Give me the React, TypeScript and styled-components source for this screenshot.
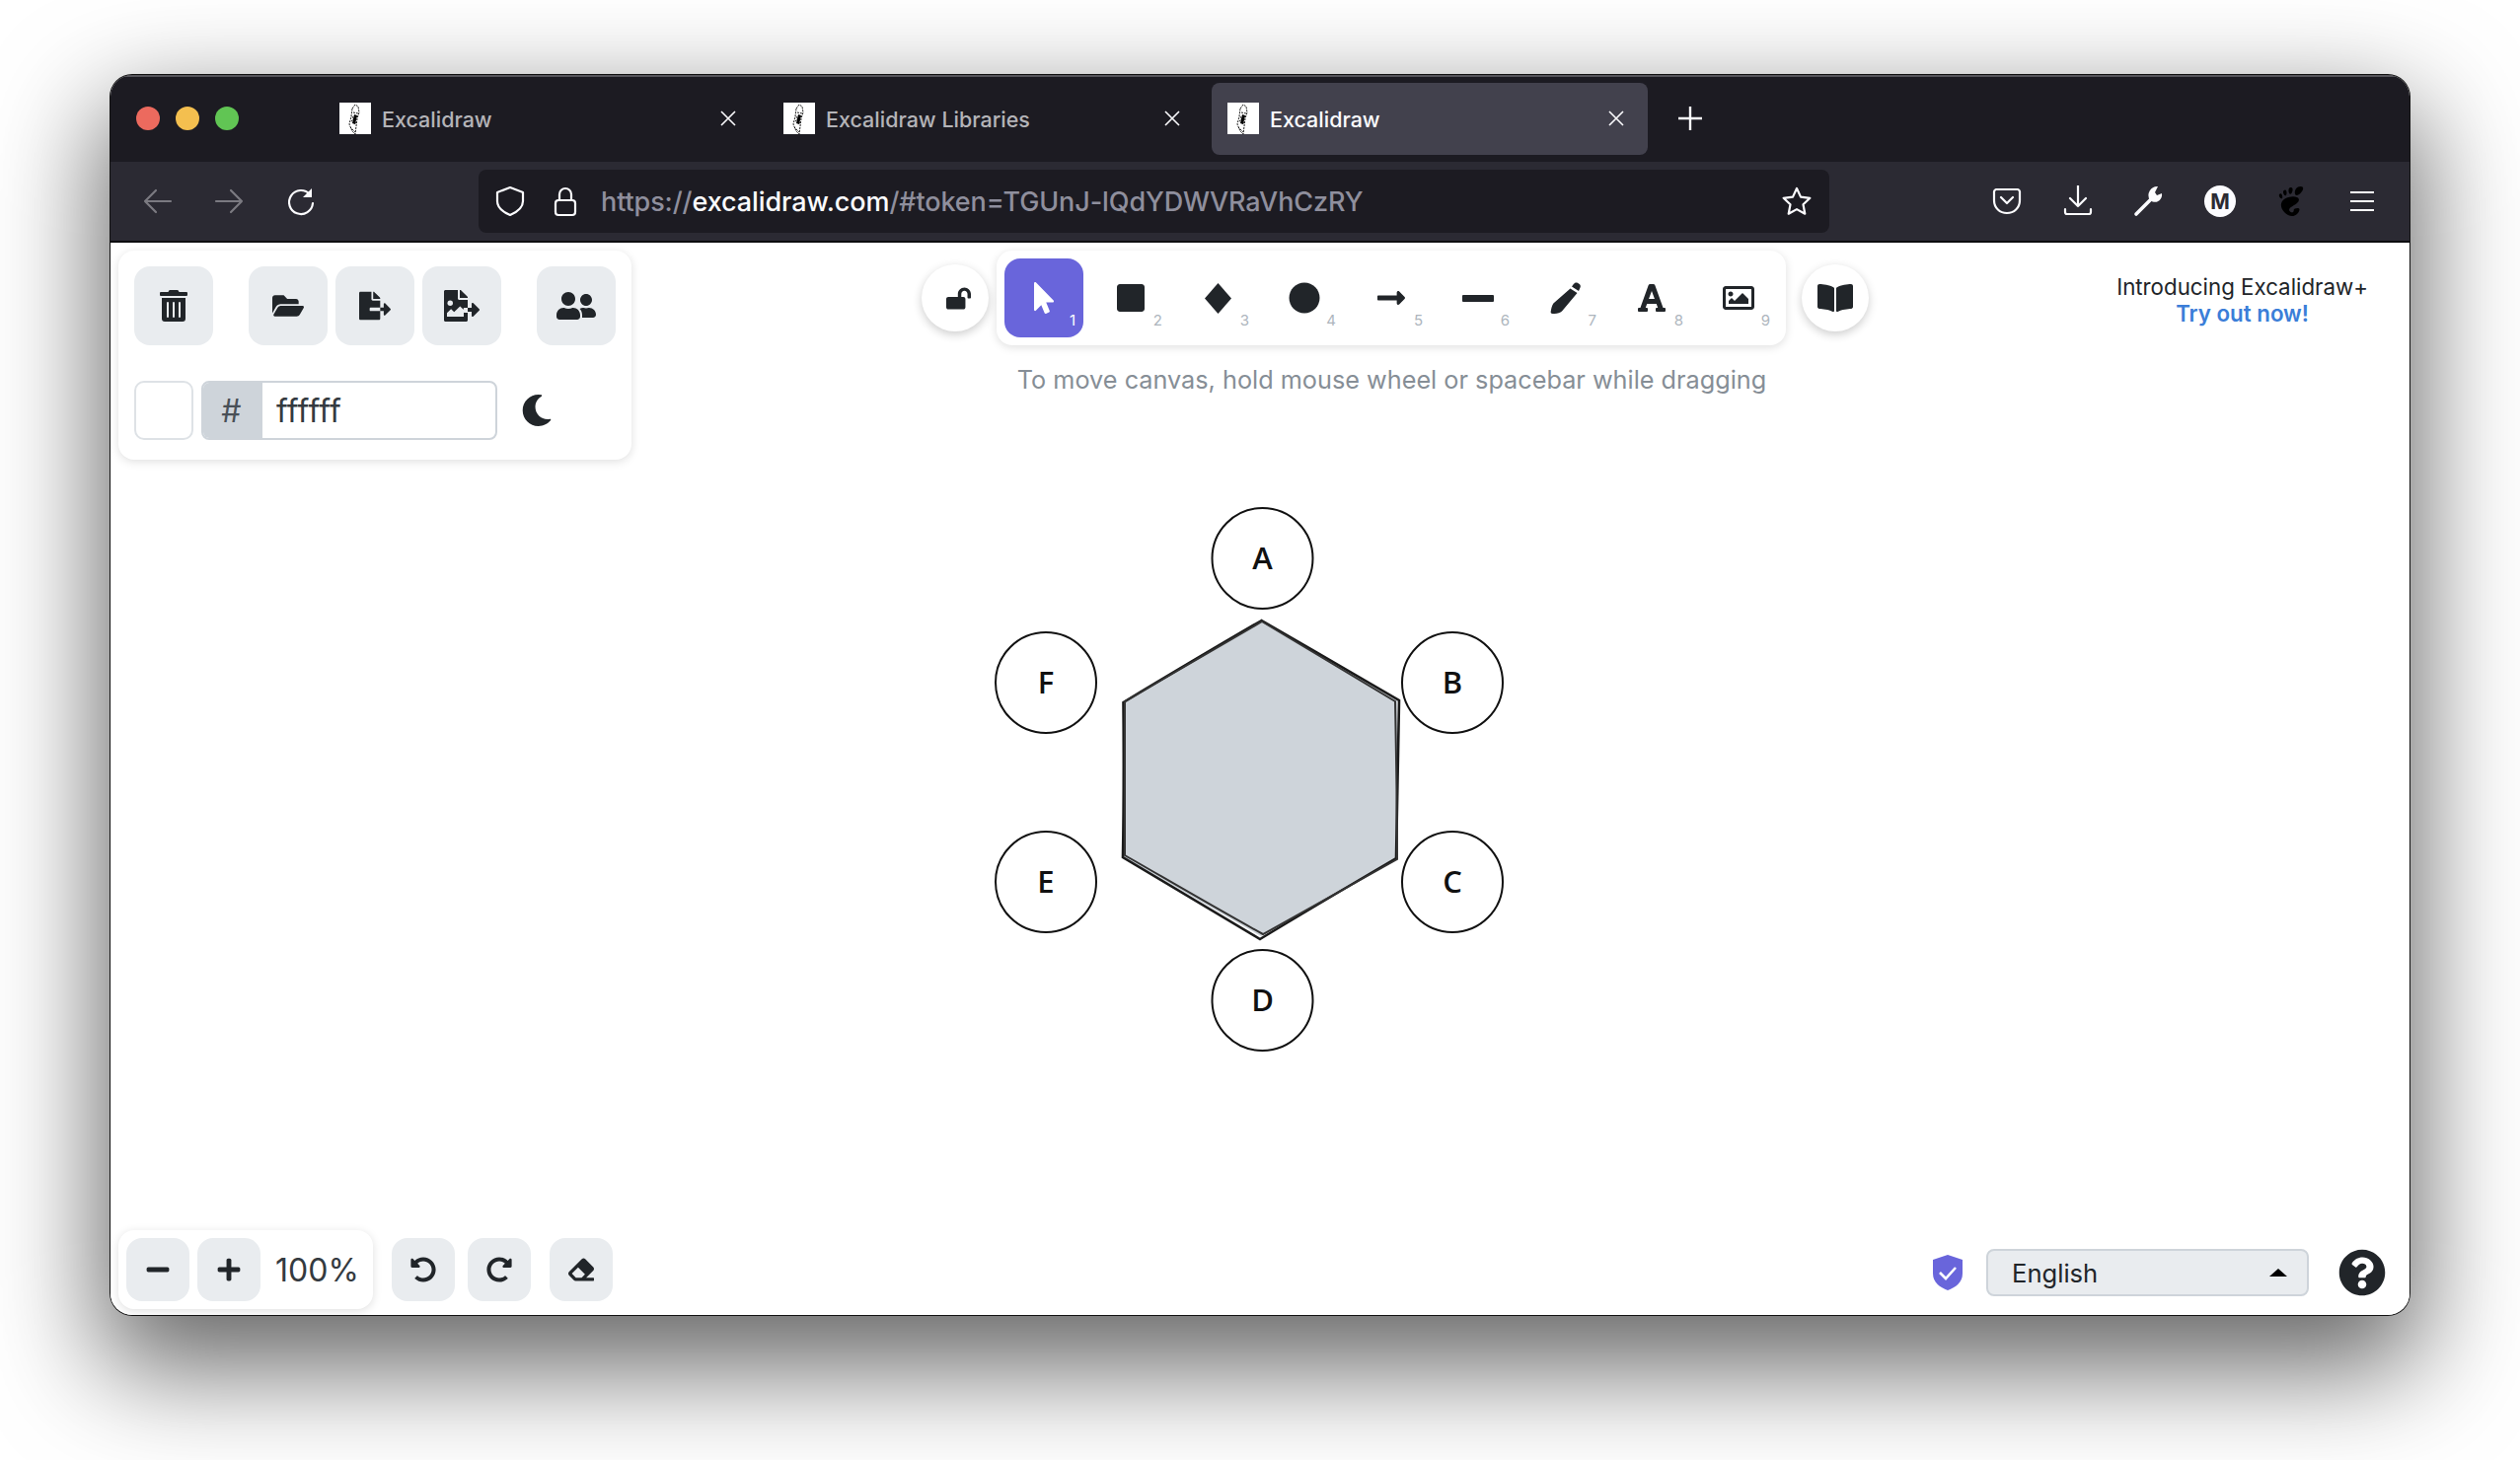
import * as React from 'react';
import styled, { createGlobalStyle } from 'styled-components';
import {
    FaBookOpen, FaCircle, FaEraser, FaFileExport, FaFolderOpen, FaFont, FaLockOpen, FaLongArrowAltRight,
    FaMinus, FaMoon, FaMousePointer, FaPlus, FaQuestionCircle, FaRedoAlt, FaRegImage,
    FaSquare, FaTrashAlt, FaUndoAlt, FaUserFriends,
} from 'react-icons/fa';
import { SiGnome } from 'react-icons/si';

const GlobalStyle = createGlobalStyle`
  html, body {
    margin: 0;
    padding: 0;
    background: #ffffff;
  }
  * {
    box-sizing: border-box;
  }
`;

const uiFont = `Inter, 'Liberation Sans', sans-serif`;

const Page = styled.div`
  width: 2554px;
  height: 1480px;
  padding: 76px 112px 147px 112px;
  font-family: ${uiFont};
  overflow: hidden;
`;

const BrowserWindow = styled.div`
  height: 100%;
  display: flex;
  flex-direction: column;
  border-radius: 22px;
  overflow: hidden;
  background: #ffffff;
  box-shadow: 0 0 0 1px #111, 0 44px 110px 10px rgba(0, 0, 0, 0.6);
`;

const TitleBar = styled.div`
  height: 88px;
  flex: none;
  display: flex;
  align-items: center;
  background: #1c1b22;
  box-shadow: inset 0 2px 0 #55545a;
  padding-left: 26px;
`;

const TrafficLights = styled.div`
  display: flex;
  gap: 16px;
  width: 190px;
`;

const TrafficLight = styled.span<{ $color: string }>`
  width: 24px;
  height: 24px;
  border-radius: 50%;
  background: ${p => p.$color};
`;

const Tab = styled.div<{ $active?: boolean }>`
  width: 442px;
  height: 73px;
  margin-right: 8px;
  padding: 0 16px;
  display: flex;
  align-items: center;
  border-radius: 8px;
  color: ${p => (p.$active ? '#fbfbfe' : '#b4b4b8')};
  background: ${p => (p.$active ? '#42414d' : 'transparent')};
  font-size: 21.5px;
  font-weight: 500;
`;

const TabTitle = styled.span`
  margin-left: 11px;
  padding-top: 2px;
  flex: 1;
`;

const Favicon = styled.svg`
  width: 32px;
  height: 32px;
  flex: none;
  background: #ffffff;
`;

const TabClose = styled.svg`
  width: 16px;
  height: 16px;
  margin-right: 8px;
  stroke: #fbfbfe;
  stroke-width: 1.6;
  fill: none;
`;

const NewTab = styled.svg`
  width: 24px;
  height: 24px;
  margin-left: 23px;
  stroke: #fbfbfe;
  stroke-width: 2.4;
  fill: none;
`;

const NavBar = styled.div`
  height: 82px;
  flex: none;
  display: flex;
  align-items: center;
  background: #2b2a33;
  border-bottom: 2px solid #0c0c0f;
`;

const NavSlot = styled.div<{ $width: number; $dim?: boolean }>`
  width: ${p => p.$width}px;
  display: flex;
  justify-content: center;
  align-items: center;
  color: ${p => (p.$dim ? '#7b7a81' : '#fbfbfe')};
`;

const NavIcon = styled.svg`
  width: 32px;
  height: 32px;
  stroke: currentColor;
  stroke-width: 2.2;
  fill: none;
  stroke-linecap: round;
  stroke-linejoin: round;
`;

const UrlBar = styled.div`
  width: 1369px;
  height: 64px;
  margin-left: 7px;
  border-radius: 8px;
  display: flex;
  align-items: center;
  background: #1c1b22;
  color: #fbfbfe;
`;

const UrlText = styled.div`
  margin-left: 12px;
  padding-top: 1px;
  flex: 1;
  white-space: nowrap;
  color: #8f8f9d;
  font-size: 27px;
  letter-spacing: -0.1px;
  font-weight: 500;
`;

const UrlHost = styled.span`
  color: #fbfbfe;
`;

const NavActions = styled.div`
  display: flex;
  margin-left: 144px;
`;

const Avatar = styled.span`
  width: 32px;
  height: 32px;
  border-radius: 50%;
  background: #fbfbfe;
  color: #2b2a33;
  display: flex;
  align-items: center;
  justify-content: center;
  font-size: 21px;
  font-weight: 700;
`;

const Canvas = styled.div`
  flex: 1;
  min-height: 0;
  display: grid;
  grid-template-rows: auto 1fr auto;
  background: #ffffff;
  color: #212529;
`;

const TopRow = styled.div`
  display: flex;
  align-items: flex-start;
  padding: 8px 42px 0 8px;
`;

const Island = styled.div`
  background: #ffffff;
  border-radius: 16px;
  box-shadow: 0 2px 10px rgba(0, 0, 0, 0.13);
`;

const ActionsPanel = styled(Island)`
  width: 520px;
  height: 212px;
  padding: 16px;
`;

const ButtonRow = styled.div`
  display: flex;
  gap: 8px;
`;

const IconGlyph = styled.span<{ $size: number; $color?: string; $shift?: number }>`
  display: flex;
  align-items: center;
  justify-content: center;
  margin-left: ${p => p.$shift || 0}px;
  color: ${p => p.$color || '#212529'};
  svg {
    display: block;
    height: ${p => p.$size}px;
    width: auto;
  }
`;

const ActionButton = styled.div<{ $gapBefore?: boolean; $small?: boolean }>`
  width: ${p => (p.$small ? 64 : 80)}px;
  height: ${p => (p.$small ? 64 : 80)}px;
  margin-left: ${p => (p.$gapBefore ? 28 : 0)}px;
  border-radius: 16px;
  display: flex;
  align-items: center;
  justify-content: center;
  background: #e9ecef;
`;

const BackgroundRow = styled.div`
  display: flex;
  align-items: center;
  margin-top: 36px;
  height: 60px;
`;

const Swatch = styled.div`
  width: 60px;
  height: 60px;
  border-radius: 10px;
  background: #ffffff;
  border: 2px solid #dee2e6;
`;

const HexField = styled.div`
  width: 300px;
  height: 60px;
  margin-left: 8px;
  display: flex;
  border: 2px solid #ced4da;
  border-radius: 8px;
  overflow: hidden;
  font-size: 32px;
  color: #343a40;
`;

const HexPrefix = styled.div`
  width: 60px;
  display: flex;
  align-items: center;
  justify-content: center;
  padding-right: 3px;
  background: #ced4da;
  color: #495057;
`;

const HexValue = styled.div`
  padding-left: 14px;
  display: flex;
  align-items: center;
  letter-spacing: 0.2px;
`;

const MoonSlot = styled.div`
  margin-left: 24px;
`;

const CenterColumn = styled.div`
  width: 960px;
  margin-left: 294px;
`;

const ToolRow = styled.div`
  display: flex;
  align-items: center;
`;

const RoundButton = styled.div`
  width: 68px;
  height: 68px;
  border-radius: 50%;
  display: flex;
  align-items: center;
  justify-content: center;
  background: #ffffff;
  box-shadow: 0 3px 10px rgba(0, 0, 0, 0.2);
`;

const ToolPanel = styled(Island)`
  width: 800px;
  height: 96px;
  padding: 8px;
  margin: 0 16px 0 8px;
  display: flex;
  gap: 8px;
`;

const ToolButton = styled.div<{ $active?: boolean }>`
  width: 80px;
  height: 80px;
  position: relative;
  border-radius: 16px;
  display: flex;
  align-items: center;
  justify-content: center;
  background: ${p => (p.$active ? '#6965db' : 'transparent')};
`;

const ToolKey = styled.span<{ $active?: boolean }>`
  position: absolute;
  right: 8px;
  bottom: 8px;
  font-size: 15px;
  line-height: 18px;
  color: ${p => (p.$active ? '#ffffff' : '#adb5bd')};
`;

const Hint = styled.div`
  margin-top: 18px;
  padding-right: 7px;
  line-height: 34px;
  text-align: center;
  font-size: 25.25px;
  color: #868e96;
`;

const Promo = styled.div`
  margin: 23px 0 0 auto;
  text-align: center;
  font-size: 22.3px;
  line-height: 27px;
  color: #212529;
`;

const PromoLink = styled.div`
  color: #3b7ed8;
  font-weight: 600;
`;

const Diagram = styled.svg`
  display: block;
  width: 530px;
  height: 565px;
  margin: 40px 0 0 888px;
`;

const NodeLabel = styled.text`
  font-family: 'Open Sans', sans-serif;
  font-size: 31px;
  font-weight: 600;
  text-anchor: middle;
  fill: #111111;
`;

const BottomRow = styled.div`
  display: flex;
  align-items: center;
  padding: 0 24px 6px 8px;
`;

const ZoomPanel = styled(Island)`
  width: 258px;
  height: 80px;
  padding: 8px;
  display: flex;
  align-items: center;
  gap: 8px;
`;

const ZoomValue = styled.div`
  margin-left: 7px;
  font-size: 32px;
  color: #343a40;
`;

const HistoryGroup = styled.div`
  display: flex;
  gap: 13px;
  margin-left: 19px;
`;

const EraseGroup = styled.div`
  margin-left: 19px;
`;

const FooterRight = styled.div`
  margin: 6px 0 0 auto;
  display: flex;
  align-items: center;
`;

const ShieldIcon = styled.svg`
  width: 30px;
  height: 36px;
`;

const LanguageSelect = styled.div`
  width: 327px;
  height: 48px;
  margin-left: 24px;
  padding: 0 20px 0 24px;
  display: flex;
  align-items: center;
  justify-content: space-between;
  border: 2px solid #ced4da;
  border-radius: 8px;
  background: #e9ecef;
  font-size: 25.6px;
  color: #212529;
`;

const SelectCaret = styled.span`
  width: 0;
  height: 0;
  border-left: 9px solid transparent;
  border-right: 9px solid transparent;
  border-bottom: 8px solid #000000;
`;

const HelpSlot = styled.div`
  margin-left: 30px;
`;

const tabTitles = ['Excalidraw', 'Excalidraw Libraries', 'Excalidraw'];

const FaviconMark = () => (
    <Favicon viewBox="0 0 32 32">
        <path d="M13 6l3-4 3 2 1 6-2 6-1 8-1 8-3-3-3-7 2-8zM14 10l5 1M12 19l7-6M13 14l4 8M11 25l5 5" fill="none" stroke="#000" strokeWidth="0.9" strokeDasharray="2 1" />
        <path d="M15 12l3 1-2 9-3-1z" fill="#000" />
    </Favicon>
);

const ImageExportIcon = () => (
    <svg viewBox="0 0 576 512">
        <path fill="currentColor" d="M384 121.9c0-6.3-2.5-12.4-7-16.9L279.1 7c-4.5-4.5-10.6-7-17-7H256v128h128zM571 308l-95.7-96.4c-10.1-10.1-27.4-3-27.4 11.3V288h-64v64h64v65.2c0 14.3 17.3 21.4 27.4 11.3L571 332c6.6-6.6 6.6-17.4 0-24zM316 336v-32c0-8.8 7.2-16 16-16h52V160H248c-13.2 0-24-10.8-24-24V0H24C10.7 0 0 10.7 0 24v464c0 13.3 10.7 24 24 24h336c13.3 0 24-10.7 24-24V368h-52c-8.8 0-16-7.2-16-16z" />
        <circle cx="100" cy="210" r="44" fill="#e9ecef" />
        <path d="M48 430v-60l66-62 50 48 96-92 60 56v110z" fill="#e9ecef" />
    </svg>
);

const PencilIcon = () => (
    <svg viewBox="0 0 32 32">
        <path fill="currentColor" d="M21.5 6.5l7 4.5L13 29.5c-2 1.7-5.5 2.7-9.5 2.5-1.5-.2-2-1-1.8-2.2.5-3.2 1.2-6 2.7-8.3zM23 4.6l1.8-2.6c1-1.4 2.5-2 4-1.2l1.6 1c1.4.9 1.8 2.5 1 4L30 8.9z" />
    </svg>
);

const tools = [
    { icon: <FaMousePointer />, size: 32, color: '#ffffff' },
    { icon: <FaSquare />, size: 32 },
    { icon: <svg viewBox="0 0 27 31"><path fill="currentColor" d="M13.5 0L27 15.5 13.5 31 0 15.5z" /></svg>, size: 31 },
    { icon: <FaCircle />, size: 32 },
    { icon: <FaLongArrowAltRight />, size: 32 },
    { icon: <svg viewBox="0 0 32 7"><rect fill="currentColor" width="32" height="7" rx="1" /></svg>, size: 7 },
    { icon: <PencilIcon />, size: 32 },
    { icon: <FaFont />, size: 32 },
    { icon: <FaRegImage />, size: 32 },
];

const nodes = [
    { label: 'A', x: 1279.5, y: 565 },
    { label: 'B', x: 1472, y: 691 },
    { label: 'C', x: 1472, y: 893 },
    { label: 'D', x: 1279.5, y: 1013 },
    { label: 'E', x: 1060, y: 893 },
    { label: 'F', x: 1060, y: 691 },
];

const App: React.FC = () => {
    function buildTabs() {
        return tabTitles.map((title, i) => (
            <Tab key={`tab-${i}`} $active={i === 2}>
                <FaviconMark />
                <TabTitle>{title}</TabTitle>
                <TabClose viewBox="0 0 16 16"><path d="M1 1l14 14M15 1L1 15" /></TabClose>
            </Tab>
        ));
    }

    function buildTools() {
        return tools.map((tool, i) => (
            <ToolButton key={`tool-${i}`} $active={i === 0}>
                <IconGlyph $size={tool.size} $color={tool.color}>{tool.icon}</IconGlyph>
                <ToolKey $active={i === 0}>{i + 1}</ToolKey>
            </ToolButton>
        ));
    }

    function buildNodes() {
        return nodes.map(node => (
            <g key={node.label}>
                <circle cx={node.x} cy={node.y} r="51" fill="#ffffff" stroke="#111111" strokeWidth="2" />
                <NodeLabel x={node.x} y={node.y + 11}>{node.label}</NodeLabel>
            </g>
        ));
    }

    return (
        <Page>
            <GlobalStyle />
            <BrowserWindow>
                <TitleBar>
                    <TrafficLights>
                        <TrafficLight $color="#ec6a5e" />
                        <TrafficLight $color="#f4bf4f" />
                        <TrafficLight $color="#61c554" />
                    </TrafficLights>
                    {buildTabs()}
                    <NewTab viewBox="0 0 24 24"><path d="M12 0v24M0 12h24" /></NewTab>
                </TitleBar>
                <NavBar>
                    <NavSlot $width={12} />
                    <NavSlot $width={72} $dim>
                        <NavIcon viewBox="0 0 32 32"><path d="M29 16H3M14 5L3 16l11 11" /></NavIcon>
                    </NavSlot>
                    <NavSlot $width={72} $dim>
                        <NavIcon viewBox="0 0 32 32"><path d="M3 16h26M18 5l11 11-11 11" /></NavIcon>
                    </NavSlot>
                    <NavSlot $width={72}>
                        <NavIcon viewBox="0 0 32 32">
                            <path d="M26 9a12 12 0 1 0 3 9" />
                            <path d="M28 3v9h-9z" fill="currentColor" stroke="none" />
                        </NavIcon>
                    </NavSlot>
                    <NavSlot $width={138} />
                    <UrlBar>
                        <NavSlot $width={64}>
                            <NavIcon viewBox="0 0 32 32"><path d="M16 2l13 5v9c0 7-6 11-13 14C9 27 3 23 3 16V7z" /></NavIcon>
                        </NavSlot>
                        <NavSlot $width={48}>
                            <NavIcon viewBox="0 0 32 32">
                                <rect x="6" y="15" width="20" height="15" rx="3" />
                                <path d="M10 15V9a6 6 0 0 1 12 0v6" />
                            </NavIcon>
                        </NavSlot>
                        <UrlText>
                            https://<UrlHost>excalidraw.com</UrlHost>/#token=TGUnJ-lQdYDWVRaVhCzRY
                        </UrlText>
                        <NavSlot $width={66}>
                            <NavIcon viewBox="0 0 32 32"><path d="M16 3l4 8.6 9.4 1.2-6.9 6.5 1.8 9.4L16 24.1l-8.3 4.6 1.8-9.4-6.9-6.5L12 11.6z" /></NavIcon>
                        </NavSlot>
                    </UrlBar>
                    <NavActions>
                        <NavSlot $width={72}>
                            <NavIcon viewBox="0 0 32 32">
                                <path d="M5 4h22a3 3 0 0 1 2 2v9c0 8-6 13-13 13S3 23 3 15V6a3 3 0 0 1 2-2z" />
                                <path d="M10 12l6 6 6-6" />
                            </NavIcon>
                        </NavSlot>
                        <NavSlot $width={72}>
                            <NavIcon viewBox="0 0 32 32"><path d="M16 0v21M8 13l8 8 8-8M3 24v3a2 2 0 0 0 2 2h22a2 2 0 0 0 2-2v-3" /></NavIcon>
                        </NavSlot>
                        <NavSlot $width={72}>
                            <NavIcon viewBox="0 0 32 32">
                                <path d="M3 29l15-15" strokeWidth="3.6" />
                                <path fill="currentColor" stroke="none" d="M17 15a9 9 0 0 1 8-14l-3 6 2 3 5-2c1 6-5 12-12 7z" />
                            </NavIcon>
                        </NavSlot>
                        <NavSlot $width={72}><Avatar>M</Avatar></NavSlot>
                        <NavSlot $width={72}><IconGlyph $size={30} $color="#000000"><SiGnome /></IconGlyph></NavSlot>
                        <NavSlot $width={72}>
                            <NavIcon viewBox="0 0 32 32"><path d="M4 7h24M4 16h24M4 25h24" strokeLinecap="butt" /></NavIcon>
                        </NavSlot>
                    </NavActions>
                </NavBar>
                <Canvas>
                    <TopRow>
                        <ActionsPanel>
                            <ButtonRow>
                                <ActionButton><IconGlyph $size={32}><FaTrashAlt /></IconGlyph></ActionButton>
                                <ActionButton $gapBefore><IconGlyph $size={32}><FaFolderOpen /></IconGlyph></ActionButton>
                                <ActionButton><IconGlyph $size={32}><FaFileExport /></IconGlyph></ActionButton>
                                <ActionButton><IconGlyph $size={32}><ImageExportIcon /></IconGlyph></ActionButton>
                                <ActionButton $gapBefore><IconGlyph $size={40}><FaUserFriends /></IconGlyph></ActionButton>
                            </ButtonRow>
                            <BackgroundRow>
                                <Swatch />
                                <HexField>
                                    <HexPrefix>#</HexPrefix>
                                    <HexValue>ffffff</HexValue>
                                </HexField>
                                <MoonSlot><IconGlyph $size={32}><FaMoon /></IconGlyph></MoonSlot>
                            </BackgroundRow>
                        </ActionsPanel>
                        <CenterColumn>
                            <ToolRow>
                                <RoundButton><IconGlyph $size={25} $shift={6}><FaLockOpen /></IconGlyph></RoundButton>
                                <ToolPanel>{buildTools()}</ToolPanel>
                                <RoundButton><IconGlyph $size={36}><FaBookOpen /></IconGlyph></RoundButton>
                            </ToolRow>
                            <Hint>To move canvas, hold mouse wheel or spacebar while dragging</Hint>
                        </CenterColumn>
                        <Promo>
                            Introducing Excalidraw+
                            <PromoLink>Try out now!</PromoLink>
                        </Promo>
                    </TopRow>
                    <Diagram viewBox="1000 505 530 565">
                        <polygon points="1278.6,628 1416,709 1416,869 1278,948 1138,868 1139,711" fill="#ced4da" />
                        <path d="M1278.6 628C1325 655 1372 682 1418 709C1417 762 1416 815 1415 869C1369 896 1323 923 1277 951C1231 924 1185 896 1138 868C1139 815 1139 763 1138.5 711C1185 683 1232 655 1278.6 628Z" fill="none" stroke="#1a1a1a" strokeWidth="2.6" />
                        <path d="M1279 629C1324 656 1369 683 1414 710C1415 763 1416 816 1416 870C1370 896 1325 921 1280 946C1233 920 1187 893 1140 866C1140 814 1140 762 1140 710C1186 683 1232 656 1279 629Z" fill="none" stroke="#333333" strokeWidth="2" />
                        {buildNodes()}
                    </Diagram>
                    <BottomRow>
                        <ZoomPanel>
                            <ActionButton $small><IconGlyph $size={26}><FaMinus /></IconGlyph></ActionButton>
                            <ActionButton $small><IconGlyph $size={26}><FaPlus /></IconGlyph></ActionButton>
                            <ZoomValue>100%</ZoomValue>
                        </ZoomPanel>
                        <HistoryGroup>
                            <ActionButton $small><IconGlyph $size={26}><FaUndoAlt /></IconGlyph></ActionButton>
                            <ActionButton $small><IconGlyph $size={26}><FaRedoAlt /></IconGlyph></ActionButton>
                        </HistoryGroup>
                        <EraseGroup>
                            <ActionButton $small><IconGlyph $size={26}><FaEraser /></IconGlyph></ActionButton>
                        </EraseGroup>
                        <FooterRight>
                            <ShieldIcon viewBox="0 0 30 36">
                                <path d="M15 0l15 5v14c0 9-7 14-15 17C7 33 0 28 0 19V5z" fill="#6965db" />
                                <path d="M7 18l6 6 10-11" fill="none" stroke="#ffffff" strokeWidth="2.6" />
                            </ShieldIcon>
                            <LanguageSelect>
                                English
                                <SelectCaret />
                            </LanguageSelect>
                            <HelpSlot><IconGlyph $size={48}><FaQuestionCircle /></IconGlyph></HelpSlot>
                        </FooterRight>
                    </BottomRow>
                </Canvas>
            </BrowserWindow>
        </Page>
    );
};

export default App;
